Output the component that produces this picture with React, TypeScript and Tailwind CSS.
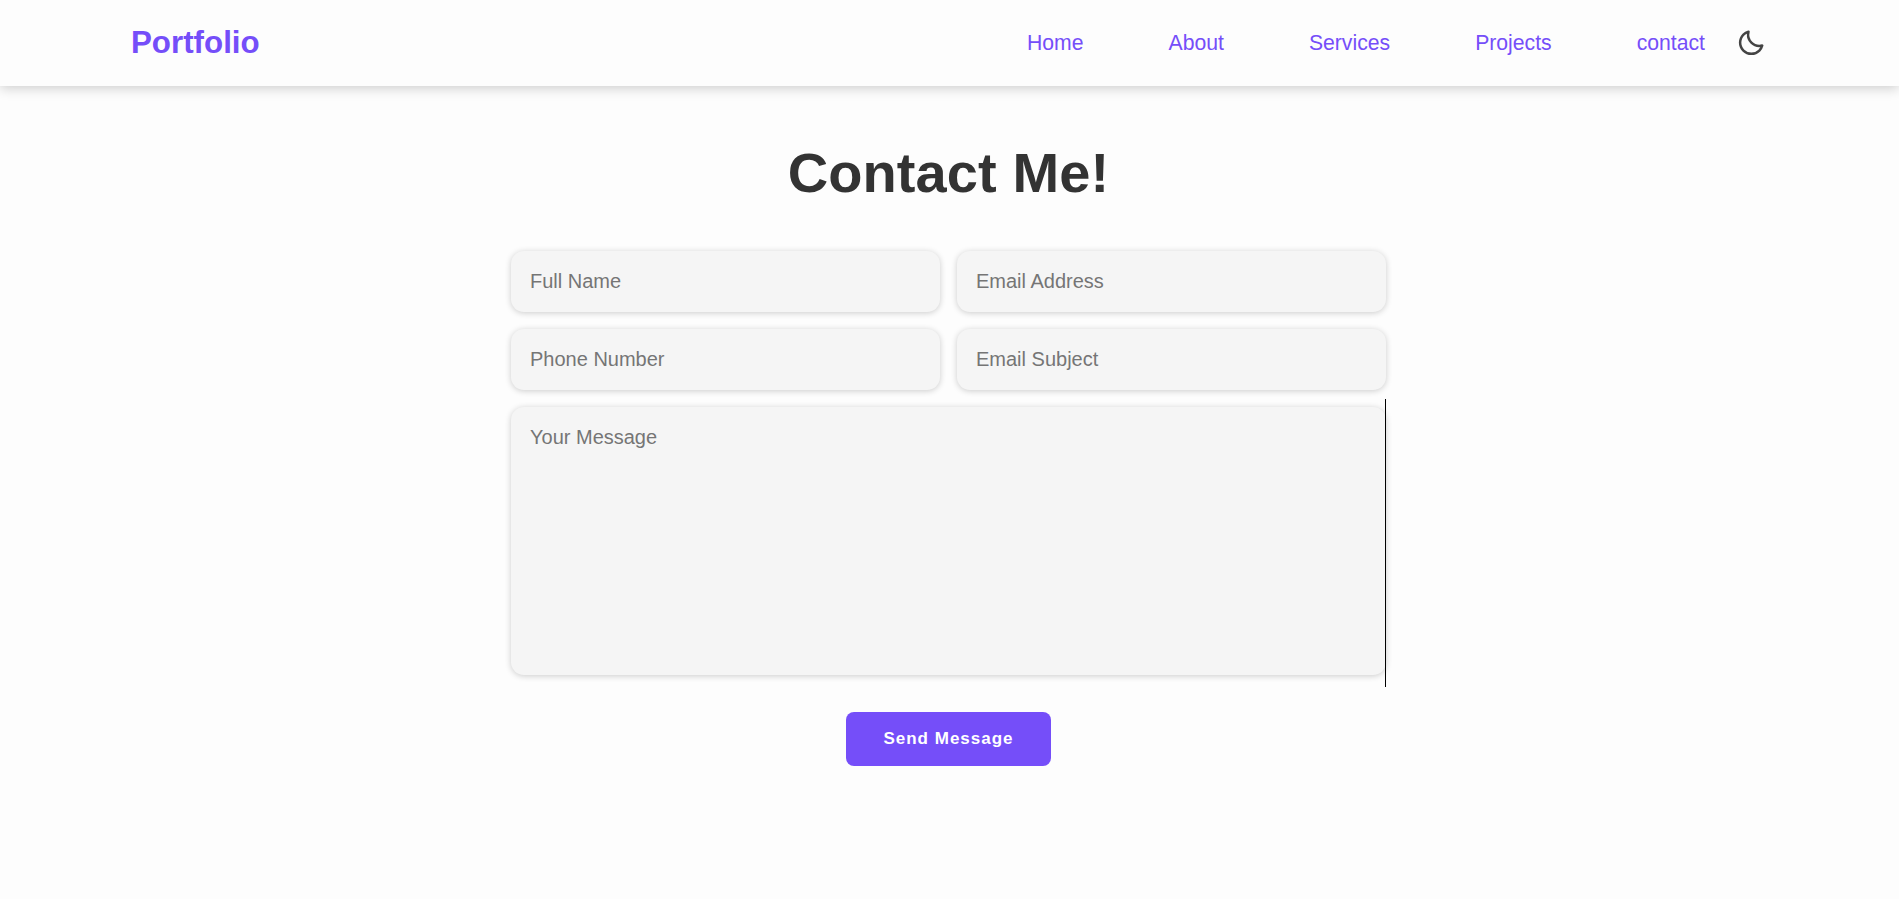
import { BiMoon } from "react-icons/bi";

const links = ["Home", "About", "Services", "Projects", "contact"];
const fields = [
  { type: "text", label: "Full Name" },
  { type: "email", label: "Email Address" },
  { type: "tel", label: "Phone Number" },
  { type: "text", label: "Email Subject" },
];
const fieldStyle =
  "block w-full rounded-[13px] bg-[#f5f5f5] px-[19px] text-[20px] text-[#333] shadow-[0_1px_6px_rgba(0,0,0,0.2)] outline-none placeholder:text-[#757575]";

export default function App() {
  return (
    <div className="min-h-[899px] bg-[#fdfdfd] font-['Liberation_Sans',Arial,sans-serif] text-[#333]">
      <header className="flex h-[86px] items-center justify-between pr-[133px] pl-[131px] shadow-[0_2px_12px_rgba(0,0,0,0.2)]">
        <a href="#" className="pb-px text-[31.3px] leading-none font-bold text-[#754ef9]">
          Portfolio
        </a>
        <div className="flex items-center">
          <nav className="flex gap-[85px] pb-px text-[21.2px] leading-none text-[#754ef9]">
            {links.map((l) => (
              <a key={l} href="#">
                {l}
              </a>
            ))}
          </nav>
          <BiMoon className="ml-[31px] size-[30px] text-[#444]" />
        </div>
      </header>
      <main className="ml-[511px] flex w-[875px] flex-col items-center pt-[52px]">
        <h1 className="text-[56px] leading-[70px] font-bold tracking-[0.1px]">Contact Me!</h1>
        <form className="mt-[43px] flex w-full flex-col items-center">
          <div className="grid w-full grid-cols-2 gap-x-[17px] gap-y-[17px]">
            {fields.map((f) => (
              <input key={f.label} type={f.type} placeholder={f.label} className={`${fieldStyle} h-[61px]`} />
            ))}
          </div>
          <div className="relative mt-[17px] w-full">
            <textarea placeholder="Your Message" className={`${fieldStyle} h-[268px] resize-none pt-[19px] leading-[23px]`} />
            <span className="absolute -top-2 right-0 h-[288px] w-px bg-black" />
          </div>
          <button type="button" className="mt-[37px] h-[54px] w-[205px] rounded-[8px] bg-[#754ef9] text-[17px] font-bold tracking-[1px] text-white">
            Send Message
          </button>
        </form>
      </main>
    </div>
  );
}
